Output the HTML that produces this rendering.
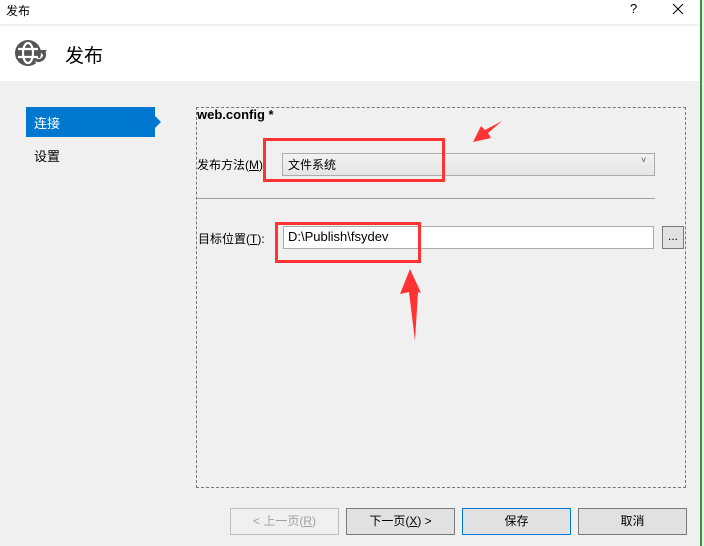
<!DOCTYPE html><html><head><meta charset="utf-8"><style>
*{margin:0;padding:0;box-sizing:border-box}
body{width:704px;height:546px;position:relative;overflow:hidden;background:#f0f0f0;font-family:"Liberation Sans","Noto Sans CJK SC",sans-serif;font-size:12px;color:#000}
.a{position:absolute}
.btn{position:absolute;top:508px;height:27px;width:109px;border:1px solid #7a7a7a;background:#e1e1e1;text-align:center;line-height:25px;font-size:12px}
</style></head><body>
<div class="a" style="left:0;top:0;width:700px;height:24px;background:#fff"></div>
<div class="a" style="left:6px;top:2px;font-size:12px">发布</div>
<div class="a" style="left:630px;top:1px;font-size:13px">?</div>
<svg class="a" style="left:672px;top:3px" width="12" height="12"><path d="M1 1L11 11M11 1L1 11" stroke="#000" stroke-width="1"/></svg>
<div class="a" style="left:0;top:24px;width:700px;height:2px;background:#f0f0f0"></div>
<div class="a" style="left:0;top:26px;width:700px;height:55px;background:#fff"></div>
<svg class="a" style="left:13px;top:38px" width="34" height="30" viewBox="0 0 34 30"><circle cx="15" cy="15" r="13" fill="#555"/><g stroke="#fff" stroke-width="2.2" fill="none"><ellipse cx="15" cy="15" rx="5" ry="10"/><line x1="5" y1="11" x2="25" y2="11"/><line x1="5" y1="19" x2="25" y2="19"/></g><path d="M23 22 a6 6 0 0 0 8 -8" stroke="#fff" stroke-width="5" fill="none"/><path d="M23 22 a6 6 0 0 0 8 -8" stroke="#555" stroke-width="3" fill="none"/><path d="M26 12 l8 0 l-4 5z" fill="#555"/></svg>
<div class="a" style="left:65px;top:41px;font-size:19px">发布</div>
<div class="a" style="left:700px;top:0;width:2px;height:546px;background:#2e9a2e"></div>
<div class="a" style="left:26px;top:107px;width:129px;height:30px;background:#0078d0"></div>
<div class="a" style="left:155px;top:116px;width:0;height:0;border-left:6px solid #0078d0;border-top:6px solid transparent;border-bottom:6px solid transparent"></div>
<div class="a" style="left:34px;top:113px;color:#fff;font-size:13px">连接</div>
<div class="a" style="left:34px;top:146px;font-size:13px">设置</div>
<div class="a" style="left:196px;top:107px;width:490px;height:381px;border:1px dashed #777"></div>
<div class="a" style="left:197px;top:107px;font-size:13px;font-weight:bold">web.config *</div>
<div class="a" style="left:197px;top:156px">发布方法(<u>M</u>):</div>
<div class="a" style="left:282px;top:153px;width:373px;height:23px;border:1px solid #acacac;background:linear-gradient(#f2f2f2,#e5e5e5)"></div>
<div class="a" style="left:288px;top:156px">文件系统</div>
<div class="a" style="left:641px;top:155px;font-size:9px;color:#555">˅</div>
<div class="a" style="left:197px;top:198px;width:458px;height:1px;background:#a0a0a0"></div>
<div class="a" style="left:198px;top:230px">目标位置(<u>T</u>):</div>
<div class="a" style="left:283px;top:226px;width:371px;height:23px;border:1px solid #acacac;background:#fff"></div>
<div class="a" style="left:288px;top:229px;font-size:13px">D:\Publish\fsydev</div>
<div class="a" style="left:662px;top:226px;width:22px;height:23px;border:1px solid #7a7a7a;background:#e1e1e1;text-align:center;line-height:18px">...</div>
<div class="a" style="left:263px;top:138px;width:182px;height:44px;border:3px solid #f33"></div>
<div class="a" style="left:275px;top:222px;width:146px;height:41px;border:3px solid #f33"></div>
<svg class="a" style="left:0;top:0" width="704" height="546"><path d="M502 121 L488 133 L491 138 L473 142 L481 126 L485 130 Z" fill="#f33"/><path d="M415 341 L409 292 L400 294 L410 269 L421 293 L418 292 Z" fill="#f33"/></svg>
<div class="btn" style="left:230px;border-color:#bfbfbf;background:#f0f0f0;color:#a0a0a0">&lt; 上一页(<u>R</u>)</div>
<div class="btn" style="left:346px">下一页(<u>X</u>) &gt;</div>
<div class="btn" style="left:462px;border-color:#0078d7">保存</div>
<div class="btn" style="left:578px">取消</div>
</body></html>
